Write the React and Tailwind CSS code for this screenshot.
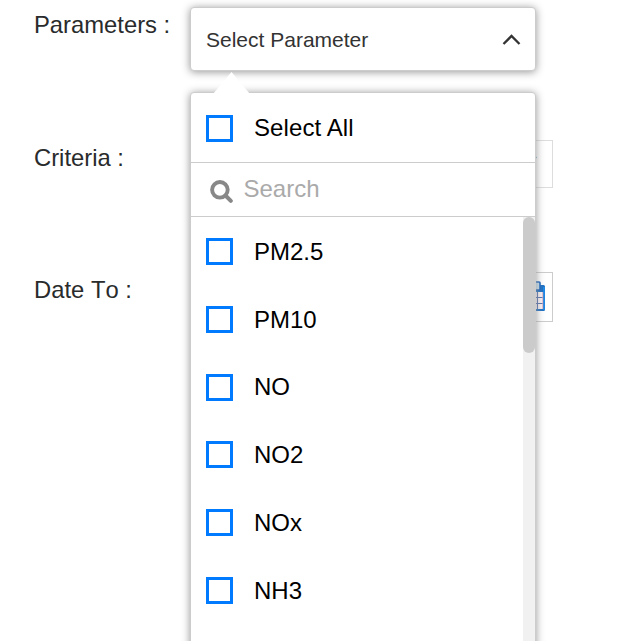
const parameters = ["PM2.5", "PM10", "NO", "NO2", "NOx", "NH3"];

function Checkbox() {
  return <span role="checkbox" aria-checked="false" className="size-[27px] shrink-0 border-[3px] border-[#007aff] bg-white" />;
}

function Option({ label }) {
  return (
    <li className="flex h-[67.8px] items-center gap-[21px] pl-[15px]">
      <Checkbox />
      <span className="pt-[0.4px] text-[24px] leading-[28px]">{label}</span>
    </li>
  );
}

function Label({ children }) {
  return (
    <div className="w-[156px] shrink-0 pt-[4px] text-[23.8px] leading-[28px] text-[#292b2c] [font-kerning:none]">{children}</div>
  );
}

function CalendarIcon() {
  return (
    <svg width="28" height="32" viewBox="0 0 28 32" fill="none">
      <rect x="1" y="4" width="26" height="26" rx="1.5" fill="#1b6fc4" />
      <path d="M4 11H25V28H4Z" fill="#faf3f7" />
      <path d="M26 6V29" stroke="#1e88e5" strokeWidth="2" />
      <rect x="4" y="1" width="5" height="8" rx="1" fill="#c8e2f2" stroke="#1762bd" strokeWidth="1.6" />
      <rect x="17" y="1" width="5" height="8" rx="1" fill="#c8e2f2" stroke="#1762bd" strokeWidth="1.6" />
      <path d="M4 16.5H25M4 22.5H25M9 11V28M14 11V28M19.5 11V28" stroke="#4f6fae" strokeWidth="1" />
      <path d="M24.7 11V28" stroke="#d9a0b4" strokeWidth="0.8" />
    </svg>
  );
}

function Menu() {
  return (
    <div className="absolute top-[85px] left-0 h-[620px] w-[346px] rounded-[4px] border border-[#ccc] bg-white text-black shadow-[0_1px_8px_#959595]">
      <svg className="absolute -top-[21px] left-[22px]" width="37" height="22" viewBox="0 0 37 22">
        <path d="M0 22L18.5 0L37 22Z" fill="#fff" />
      </svg>
      <div className="flex h-[70px] items-center gap-[21px] border-b border-[#ccc] pt-[2px] pl-[15px]">
        <Checkbox />
        <span className="-mt-[2px] text-[24px] leading-[28px] tracking-[0.1px]">Select All</span>
      </div>
      <div className="flex h-[54px] items-center border-b border-[#ccc] pl-[19px]">
        <svg className="mt-[3px]" width="23" height="23" viewBox="0 0 23 23" fill="none" stroke="#888">
          <circle cx="9.9" cy="9.8" r="7.8" strokeWidth="3.9" />
          <path d="M15.5 15.5L20.8 20.8" strokeWidth="4" strokeLinecap="round" />
        </svg>
        <span className="-mt-[2px] ml-[10.5px] text-[24px] leading-[28px] text-[#aaa]">Search</span>
      </div>
      <div className="flex h-[494px] justify-between overflow-hidden">
        <ul className="pt-[0.7px]">
          {parameters.map((name) => (
            <Option key={name} label={name} />
          ))}
        </ul>
        <div className="w-[12px] bg-[#f1f1f1]">
          <div className="h-[136px] rounded-full bg-[#cbcbcb]" />
        </div>
      </div>
    </div>
  );
}

export default function App() {
  return (
    <main className="flex h-[641px] w-[621px] flex-col overflow-hidden bg-white pt-[7px] pl-[34px] font-['Liberation_Sans',Arial,sans-serif]">
      <div className="flex h-[133px] items-start">
        <Label>Parameters :</Label>
        <div className="relative z-10 h-[64px] w-[346px] shrink-0">
          <button className="flex h-full w-full items-center justify-between rounded-[4px] border border-[#ccc] bg-white pt-px pr-[14px] pl-[15px] text-[21px] leading-[24px] text-[#333] shadow-[0_1px_8px_#959595]">
            <span>Select Parameter</span>
            <svg width="19" height="12" viewBox="0 0 19 12" fill="none" stroke="#333" strokeWidth="2.3">
              <path d="M1.5 10L9.5 2L17.5 10" />
            </svg>
          </button>
          <Menu />
        </div>
      </div>
      <div className="flex h-[132px] items-start">
        <Label>Criteria :</Label>
        <div className="flex h-[48px] w-[363px] items-start justify-end border border-[#ddd] pt-[15px] pr-[15px]">
          <svg width="12" height="7" viewBox="0 0 12 7" fill="none" stroke="#5f9fc0" strokeWidth="1.5">
            <path d="M0.5 1L6 6L11.5 1" />
          </svg>
        </div>
      </div>
      <div className="flex items-start">
        <Label>Date To :</Label>
        <div className="flex h-[50px] w-[363px] items-center justify-end border border-[#ccc] pr-[6px]">
          <CalendarIcon />
        </div>
      </div>
    </main>
  );
}
